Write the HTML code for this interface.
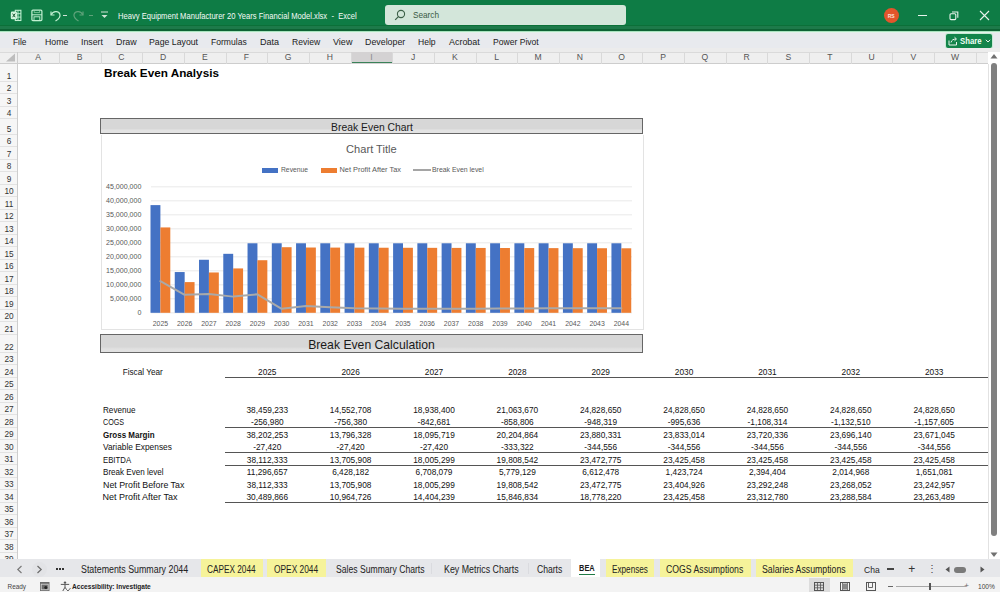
<!DOCTYPE html>
<html><head><meta charset="utf-8"><style>
html,body{margin:0;padding:0;width:1000px;height:592px;overflow:hidden;background:#fff;position:relative;font-family:"Liberation Sans", sans-serif;}
.t{position:absolute;white-space:nowrap;line-height:1;font-family:"Liberation Sans", sans-serif;}
</style></head><body>
<div style="position:absolute;left:0px;top:0px;width:1000px;height:25px;background:#0e7c45;"></div>
<div style="position:absolute;left:0px;top:25px;width:1000px;height:0.8px;background:#0b7038;"></div>
<div style="position:absolute;left:0px;top:25.8px;width:1000px;height:3.2px;background:#1d7a4a;"></div>
<div style="position:absolute;left:0px;top:29px;width:1000px;height:1.8px;background:#0d6334;"></div>
<div style="position:absolute;left:0px;top:30.8px;width:1000px;height:1px;background:#a9e3bf;"></div>
<svg style="position:absolute;left:10px;top:9px" width="12" height="13" viewBox="0 0 12 13">
<rect x="5.3" y="1.3" width="5.6" height="10.2" fill="none" stroke="#c2f0d2" stroke-width="1.1"/>
<path d="M8 1.3 V11.5 M5.3 4.7 H10.9 M5.3 8.1 H10.9" stroke="#c2f0d2" stroke-width="0.9"/>
<rect x="0.8" y="2.6" width="6.2" height="7.6" rx="1.3" fill="#d2f5dd"/>
<path d="M2.6 4.6 L5.2 8.2 M5.2 4.6 L2.6 8.2" stroke="#1d5c36" stroke-width="1"/>
</svg>
<svg style="position:absolute;left:31px;top:9px" width="12" height="13" viewBox="0 0 12 13">
<rect x="0.9" y="1.2" width="10" height="10.4" rx="1" fill="none" stroke="#c2f0d2" stroke-width="1.2"/>
<path d="M0.9 5.8 H10.9" stroke="#c2f0d2" stroke-width="1"/>
<rect x="3" y="7.8" width="5.8" height="3.8" fill="none" stroke="#c2f0d2" stroke-width="0.9"/>
<path d="M3.2 1.2 V3.6 H8.6 V1.2" fill="none" stroke="#9fdcb5" stroke-width="0.7"/>
</svg>
<svg style="position:absolute;left:49px;top:8px" width="13" height="14" viewBox="0 0 13 14">
<path d="M2 3.5 L2 7 L5.5 7" fill="none" stroke="#c2f0d2" stroke-width="1.2"/>
<path d="M2.2 6.8 C4 3 9.5 2.5 10.8 6 C11.8 9 9 11.5 6.5 13" fill="none" stroke="#c2f0d2" stroke-width="1.2"/>
</svg>
<div style="position:absolute;left:63px;top:15px;width:4px;height:1px;background:#cfe3d6;"></div>
<svg style="position:absolute;left:73px;top:8px" width="12" height="14" viewBox="0 0 12 14">
<path d="M10 3.5 L10 7 L6.5 7" fill="none" stroke="#5fa27a" stroke-width="1.2"/>
<path d="M9.8 6.8 C8 3 2.5 2.5 1.2 6 C0.2 9 3 11.5 5.5 13" fill="none" stroke="#5fa27a" stroke-width="1.2"/>
</svg>
<div style="position:absolute;left:89px;top:15px;width:4px;height:1px;background:#5fa27a;"></div>
<svg style="position:absolute;left:99px;top:10px" width="11" height="10" viewBox="0 0 11 10">
<line x1="2" y1="2" x2="9" y2="2" stroke="#cfe3d6" stroke-width="1"/>
<path d="M2.5 5 L8.5 5 L5.5 8 Z" fill="#cfe3d6"/>
</svg>
<div class="t" style="left:117.5px;top:16.2px;font-size:9.4px;color:#f4faf6;font-weight:normal;transform:translateY(-50%) scaleX(0.8109);transform-origin:0 50%;">Heavy Equipment Manufacturer 20 Years Financial Model.xlsx&nbsp; -&nbsp; Excel</div>
<div style="position:absolute;left:385px;top:5px;width:240.5px;height:19.5px;background:#d3e6da;border-radius:3px;"></div>
<svg style="position:absolute;left:394px;top:9px" width="12" height="12" viewBox="0 0 12 12">
<circle cx="7" cy="5" r="3.6" fill="none" stroke="#3b5f47" stroke-width="1.1"/>
<line x1="4.4" y1="7.6" x2="1.2" y2="10.8" stroke="#3b5f47" stroke-width="1.2"/>
</svg>
<div class="t" style="left:413px;top:15.3px;font-size:9.8px;color:#3a5a45;font-weight:normal;transform:translateY(-50%) scaleX(0.8387);transform-origin:0 50%;">Search</div>
<div style="position:absolute;left:883.5px;top:8px;width:15px;height:15px;border-radius:50%;background:#e2552b;"></div>
<div class="t" style="left:891.2px;top:15.6px;font-size:5px;color:#fbe3da;font-weight:bold;transform:translate(-50%,-50%);transform-origin:50% 50%;">RS</div>
<div style="position:absolute;left:918px;top:15px;width:9px;height:1px;background:#e8f3ec;"></div>
<svg style="position:absolute;left:949px;top:11px" width="10" height="10" viewBox="0 0 10 10">
<rect x="1" y="2.8" width="5.8" height="5.8" fill="none" stroke="#e8f3ec" stroke-width="1.1" rx="1"/>
<path d="M3 1 L8.8 1 L8.8 6.8" fill="none" stroke="#e8f3ec" stroke-width="1.1"/>
</svg>
<svg style="position:absolute;left:979px;top:10px" width="11" height="11" viewBox="0 0 11 11">
<path d="M1 1 L10 10 M10 1 L1 10" stroke="#e8f3ec" stroke-width="1.1"/>
</svg>
<div style="position:absolute;left:0px;top:31.8px;width:1000px;height:16px;background:#e8eaee;"></div>
<div style="position:absolute;left:0px;top:31.8px;width:1000px;height:1.2px;background:#e3f1ea;"></div>
<div class="t" style="left:13.4px;top:42.1px;font-size:9.5px;color:#222222;font-weight:normal;transform:translateY(-50%) scaleX(0.8800);transform-origin:0 50%;">File</div>
<div class="t" style="left:44.8px;top:42.1px;font-size:9.5px;color:#222222;font-weight:normal;transform:translateY(-50%) scaleX(0.9200);transform-origin:0 50%;">Home</div>
<div class="t" style="left:80.6px;top:42.1px;font-size:9.5px;color:#222222;font-weight:normal;transform:translateY(-50%) scaleX(0.9250);transform-origin:0 50%;">Insert</div>
<div class="t" style="left:116.2px;top:42.1px;font-size:9.5px;color:#222222;font-weight:normal;transform:translateY(-50%) scaleX(0.9318);transform-origin:0 50%;">Draw</div>
<div class="t" style="left:149.3px;top:42.1px;font-size:9.5px;color:#222222;font-weight:normal;transform:translateY(-50%) scaleX(0.9189);transform-origin:0 50%;">Page Layout</div>
<div class="t" style="left:211.4px;top:42.1px;font-size:9.5px;color:#222222;font-weight:normal;transform:translateY(-50%) scaleX(0.9025);transform-origin:0 50%;">Formulas</div>
<div class="t" style="left:260px;top:42.1px;font-size:9.5px;color:#222222;font-weight:normal;transform:translateY(-50%) scaleX(0.9500);transform-origin:0 50%;">Data</div>
<div class="t" style="left:292px;top:42.1px;font-size:9.5px;color:#222222;font-weight:normal;transform:translateY(-50%) scaleX(0.9032);transform-origin:0 50%;">Review</div>
<div class="t" style="left:333px;top:42.1px;font-size:9.5px;color:#222222;font-weight:normal;transform:translateY(-50%) scaleX(0.9500);transform-origin:0 50%;">View</div>
<div class="t" style="left:365px;top:42.1px;font-size:9.5px;color:#222222;font-weight:normal;transform:translateY(-50%) scaleX(0.9302);transform-origin:0 50%;">Developer</div>
<div class="t" style="left:418px;top:42.1px;font-size:9.5px;color:#222222;font-weight:normal;transform:translateY(-50%) scaleX(0.9000);transform-origin:0 50%;">Help</div>
<div class="t" style="left:449px;top:42.1px;font-size:9.5px;color:#222222;font-weight:normal;transform:translateY(-50%) scaleX(0.9394);transform-origin:0 50%;">Acrobat</div>
<div class="t" style="left:493px;top:42.1px;font-size:9.5px;color:#222222;font-weight:normal;transform:translateY(-50%) scaleX(0.9020);transform-origin:0 50%;">Power Pivot</div>
<div style="position:absolute;left:946px;top:33.6px;width:46.2px;height:14.8px;background:#12844a;border-radius:2px;box-shadow:0 0 0 1px #c6ead4;"></div>
<svg style="position:absolute;left:948px;top:36px" width="10" height="10" viewBox="0 0 10 10">
<path d="M1 4.5 L1 9 L8.5 9 L8.5 6" fill="none" stroke="#e8f3ec" stroke-width="1"/>
<path d="M3 6.5 C3.5 4 5.5 3 8 3 M6.5 1.2 L8.5 3 L6.5 4.8" fill="none" stroke="#e8f3ec" stroke-width="1"/>
</svg>
<div class="t" style="left:959.8px;top:41.2px;font-size:9px;color:#f0fff5;font-weight:bold;transform:translateY(-50%) scaleX(0.8640);transform-origin:0 50%;">Share</div>
<svg style="position:absolute;left:985px;top:39px" width="6" height="4" viewBox="0 0 6 4">
<path d="M0.8 0.8 L3 3 L5.2 0.8" fill="none" stroke="#e8f3ec" stroke-width="1"/>
</svg>
<div style="position:absolute;left:0px;top:47.8px;width:1000px;height:3.8px;background:#ececec;"></div>
<div style="position:absolute;left:0px;top:51.6px;width:988px;height:1px;background:#dadada;"></div>
<div style="position:absolute;left:0px;top:52.6px;width:988px;height:10.8px;background:#efefef;"></div>
<div style="position:absolute;left:0px;top:63.2px;width:988px;height:0.9px;background:#cdcdcd;"></div>
<div style="position:absolute;left:17.2px;top:52.5px;width:0.9px;height:11px;background:#d9d9d9;"></div>
<div class="t" style="left:38.04px;top:57.2px;font-size:8.6px;color:#555555;font-weight:normal;transform:translate(-50%,-50%);transform-origin:50% 50%;">A</div>
<div style="position:absolute;left:58.879999999999995px;top:52.5px;width:0.9px;height:11px;background:#d9d9d9;"></div>
<div class="t" style="left:79.72px;top:57.2px;font-size:8.6px;color:#555555;font-weight:normal;transform:translate(-50%,-50%);transform-origin:50% 50%;">B</div>
<div style="position:absolute;left:100.56px;top:52.5px;width:0.9px;height:11px;background:#d9d9d9;"></div>
<div class="t" style="left:121.4px;top:57.2px;font-size:8.6px;color:#555555;font-weight:normal;transform:translate(-50%,-50%);transform-origin:50% 50%;">C</div>
<div style="position:absolute;left:142.23999999999998px;top:52.5px;width:0.9px;height:11px;background:#d9d9d9;"></div>
<div class="t" style="left:163.07999999999998px;top:57.2px;font-size:8.6px;color:#555555;font-weight:normal;transform:translate(-50%,-50%);transform-origin:50% 50%;">D</div>
<div style="position:absolute;left:183.92px;top:52.5px;width:0.9px;height:11px;background:#d9d9d9;"></div>
<div class="t" style="left:204.76px;top:57.2px;font-size:8.6px;color:#555555;font-weight:normal;transform:translate(-50%,-50%);transform-origin:50% 50%;">E</div>
<div style="position:absolute;left:225.6px;top:52.5px;width:0.9px;height:11px;background:#d9d9d9;"></div>
<div class="t" style="left:246.44px;top:57.2px;font-size:8.6px;color:#555555;font-weight:normal;transform:translate(-50%,-50%);transform-origin:50% 50%;">F</div>
<div style="position:absolute;left:267.28px;top:52.5px;width:0.9px;height:11px;background:#d9d9d9;"></div>
<div class="t" style="left:288.11999999999995px;top:57.2px;font-size:8.6px;color:#555555;font-weight:normal;transform:translate(-50%,-50%);transform-origin:50% 50%;">G</div>
<div style="position:absolute;left:308.96px;top:52.5px;width:0.9px;height:11px;background:#d9d9d9;"></div>
<div class="t" style="left:329.79999999999995px;top:57.2px;font-size:8.6px;color:#555555;font-weight:normal;transform:translate(-50%,-50%);transform-origin:50% 50%;">H</div>
<div style="position:absolute;left:350.64px;top:51.5px;width:41.68px;height:12px;background:#d4d2d3;"></div>
<div style="position:absolute;left:350.64px;top:61.8px;width:41.68px;height:1.7px;background:#3a8259;"></div>
<div style="position:absolute;left:350.64px;top:52.5px;width:0.9px;height:11px;background:#d9d9d9;"></div>
<div class="t" style="left:371.47999999999996px;top:57.2px;font-size:8.6px;color:#8a8a8a;font-weight:normal;transform:translate(-50%,-50%);transform-origin:50% 50%;">I</div>
<div style="position:absolute;left:392.32px;top:52.5px;width:0.9px;height:11px;background:#d9d9d9;"></div>
<div class="t" style="left:413.15999999999997px;top:57.2px;font-size:8.6px;color:#555555;font-weight:normal;transform:translate(-50%,-50%);transform-origin:50% 50%;">J</div>
<div style="position:absolute;left:434.0px;top:52.5px;width:0.9px;height:11px;background:#d9d9d9;"></div>
<div class="t" style="left:454.84px;top:57.2px;font-size:8.6px;color:#555555;font-weight:normal;transform:translate(-50%,-50%);transform-origin:50% 50%;">K</div>
<div style="position:absolute;left:475.68px;top:52.5px;width:0.9px;height:11px;background:#d9d9d9;"></div>
<div class="t" style="left:496.52px;top:57.2px;font-size:8.6px;color:#555555;font-weight:normal;transform:translate(-50%,-50%);transform-origin:50% 50%;">L</div>
<div style="position:absolute;left:517.36px;top:52.5px;width:0.9px;height:11px;background:#d9d9d9;"></div>
<div class="t" style="left:538.2px;top:57.2px;font-size:8.6px;color:#555555;font-weight:normal;transform:translate(-50%,-50%);transform-origin:50% 50%;">M</div>
<div style="position:absolute;left:559.0400000000001px;top:52.5px;width:0.9px;height:11px;background:#d9d9d9;"></div>
<div class="t" style="left:579.8800000000001px;top:57.2px;font-size:8.6px;color:#555555;font-weight:normal;transform:translate(-50%,-50%);transform-origin:50% 50%;">N</div>
<div style="position:absolute;left:600.72px;top:52.5px;width:0.9px;height:11px;background:#d9d9d9;"></div>
<div class="t" style="left:621.5600000000001px;top:57.2px;font-size:8.6px;color:#555555;font-weight:normal;transform:translate(-50%,-50%);transform-origin:50% 50%;">O</div>
<div style="position:absolute;left:642.4000000000001px;top:52.5px;width:0.9px;height:11px;background:#d9d9d9;"></div>
<div class="t" style="left:663.2400000000001px;top:57.2px;font-size:8.6px;color:#555555;font-weight:normal;transform:translate(-50%,-50%);transform-origin:50% 50%;">P</div>
<div style="position:absolute;left:684.08px;top:52.5px;width:0.9px;height:11px;background:#d9d9d9;"></div>
<div class="t" style="left:704.9200000000001px;top:57.2px;font-size:8.6px;color:#555555;font-weight:normal;transform:translate(-50%,-50%);transform-origin:50% 50%;">Q</div>
<div style="position:absolute;left:725.76px;top:52.5px;width:0.9px;height:11px;background:#d9d9d9;"></div>
<div class="t" style="left:746.6px;top:57.2px;font-size:8.6px;color:#555555;font-weight:normal;transform:translate(-50%,-50%);transform-origin:50% 50%;">R</div>
<div style="position:absolute;left:767.44px;top:52.5px;width:0.9px;height:11px;background:#d9d9d9;"></div>
<div class="t" style="left:788.2800000000001px;top:57.2px;font-size:8.6px;color:#555555;font-weight:normal;transform:translate(-50%,-50%);transform-origin:50% 50%;">S</div>
<div style="position:absolute;left:809.12px;top:52.5px;width:0.9px;height:11px;background:#d9d9d9;"></div>
<div class="t" style="left:829.96px;top:57.2px;font-size:8.6px;color:#555555;font-weight:normal;transform:translate(-50%,-50%);transform-origin:50% 50%;">T</div>
<div style="position:absolute;left:850.8000000000001px;top:52.5px;width:0.9px;height:11px;background:#d9d9d9;"></div>
<div class="t" style="left:871.6400000000001px;top:57.2px;font-size:8.6px;color:#555555;font-weight:normal;transform:translate(-50%,-50%);transform-origin:50% 50%;">U</div>
<div style="position:absolute;left:892.48px;top:52.5px;width:0.9px;height:11px;background:#d9d9d9;"></div>
<div class="t" style="left:913.32px;top:57.2px;font-size:8.6px;color:#555555;font-weight:normal;transform:translate(-50%,-50%);transform-origin:50% 50%;">V</div>
<div style="position:absolute;left:934.1600000000001px;top:52.5px;width:0.9px;height:11px;background:#d9d9d9;"></div>
<div class="t" style="left:955.0000000000001px;top:57.2px;font-size:8.6px;color:#555555;font-weight:normal;transform:translate(-50%,-50%);transform-origin:50% 50%;">W</div>
<div style="position:absolute;left:975.84px;top:52.5px;width:0.9px;height:11px;background:#d9d9d9;"></div>
<svg style="position:absolute;left:5px;top:53px" width="11" height="9" viewBox="0 0 11 9">
<path d="M10 0.5 L10 8.5 L1 8.5 Z" fill="#bdbdbd"/></svg>
<div style="position:absolute;left:0px;top:63.5px;width:17.2px;height:495px;background:#f6f6f6;"></div>
<div style="position:absolute;left:17.2px;top:52px;width:1px;height:506.6px;background:#cdcdcd;"></div>
<div style="position:absolute;left:0px;top:80.5px;width:17.2px;height:0.8px;background:#e2e2e2;"></div>
<div class="t" style="left:9.3px;top:75.8px;font-size:9.6px;color:#333333;font-weight:normal;transform:translate(-50%,-50%) scaleX(0.86);transform-origin:50% 50%;">1</div>
<div style="position:absolute;left:0px;top:93.0px;width:17.2px;height:0.8px;background:#e2e2e2;"></div>
<div class="t" style="left:9.3px;top:88.3px;font-size:9.6px;color:#333333;font-weight:normal;transform:translate(-50%,-50%) scaleX(0.86);transform-origin:50% 50%;">2</div>
<div style="position:absolute;left:0px;top:105.5px;width:17.2px;height:0.8px;background:#e2e2e2;"></div>
<div class="t" style="left:9.3px;top:100.8px;font-size:9.6px;color:#333333;font-weight:normal;transform:translate(-50%,-50%) scaleX(0.86);transform-origin:50% 50%;">3</div>
<div style="position:absolute;left:0px;top:118.0px;width:17.2px;height:0.8px;background:#e2e2e2;"></div>
<div class="t" style="left:9.3px;top:113.3px;font-size:9.6px;color:#333333;font-weight:normal;transform:translate(-50%,-50%) scaleX(0.86);transform-origin:50% 50%;">4</div>
<div style="position:absolute;left:0px;top:133.5px;width:17.2px;height:0.8px;background:#e2e2e2;"></div>
<div class="t" style="left:9.3px;top:128.8px;font-size:9.6px;color:#333333;font-weight:normal;transform:translate(-50%,-50%) scaleX(0.86);transform-origin:50% 50%;">5</div>
<div style="position:absolute;left:0px;top:146.0px;width:17.2px;height:0.8px;background:#e2e2e2;"></div>
<div class="t" style="left:9.3px;top:141.3px;font-size:9.6px;color:#333333;font-weight:normal;transform:translate(-50%,-50%) scaleX(0.86);transform-origin:50% 50%;">6</div>
<div style="position:absolute;left:0px;top:158.5px;width:17.2px;height:0.8px;background:#e2e2e2;"></div>
<div class="t" style="left:9.3px;top:153.8px;font-size:9.6px;color:#333333;font-weight:normal;transform:translate(-50%,-50%) scaleX(0.86);transform-origin:50% 50%;">7</div>
<div style="position:absolute;left:0px;top:171.0px;width:17.2px;height:0.8px;background:#e2e2e2;"></div>
<div class="t" style="left:9.3px;top:166.3px;font-size:9.6px;color:#333333;font-weight:normal;transform:translate(-50%,-50%) scaleX(0.86);transform-origin:50% 50%;">8</div>
<div style="position:absolute;left:0px;top:183.5px;width:17.2px;height:0.8px;background:#e2e2e2;"></div>
<div class="t" style="left:9.3px;top:178.8px;font-size:9.6px;color:#333333;font-weight:normal;transform:translate(-50%,-50%) scaleX(0.86);transform-origin:50% 50%;">9</div>
<div style="position:absolute;left:0px;top:196.0px;width:17.2px;height:0.8px;background:#e2e2e2;"></div>
<div class="t" style="left:9.3px;top:191.3px;font-size:9.6px;color:#333333;font-weight:normal;transform:translate(-50%,-50%) scaleX(0.86);transform-origin:50% 50%;">10</div>
<div style="position:absolute;left:0px;top:208.5px;width:17.2px;height:0.8px;background:#e2e2e2;"></div>
<div class="t" style="left:9.3px;top:203.8px;font-size:9.6px;color:#333333;font-weight:normal;transform:translate(-50%,-50%) scaleX(0.86);transform-origin:50% 50%;">11</div>
<div style="position:absolute;left:0px;top:221.0px;width:17.2px;height:0.8px;background:#e2e2e2;"></div>
<div class="t" style="left:9.3px;top:216.3px;font-size:9.6px;color:#333333;font-weight:normal;transform:translate(-50%,-50%) scaleX(0.86);transform-origin:50% 50%;">12</div>
<div style="position:absolute;left:0px;top:233.5px;width:17.2px;height:0.8px;background:#e2e2e2;"></div>
<div class="t" style="left:9.3px;top:228.8px;font-size:9.6px;color:#333333;font-weight:normal;transform:translate(-50%,-50%) scaleX(0.86);transform-origin:50% 50%;">13</div>
<div style="position:absolute;left:0px;top:246.0px;width:17.2px;height:0.8px;background:#e2e2e2;"></div>
<div class="t" style="left:9.3px;top:241.3px;font-size:9.6px;color:#333333;font-weight:normal;transform:translate(-50%,-50%) scaleX(0.86);transform-origin:50% 50%;">14</div>
<div style="position:absolute;left:0px;top:258.5px;width:17.2px;height:0.8px;background:#e2e2e2;"></div>
<div class="t" style="left:9.3px;top:253.8px;font-size:9.6px;color:#333333;font-weight:normal;transform:translate(-50%,-50%) scaleX(0.86);transform-origin:50% 50%;">15</div>
<div style="position:absolute;left:0px;top:271.0px;width:17.2px;height:0.8px;background:#e2e2e2;"></div>
<div class="t" style="left:9.3px;top:266.3px;font-size:9.6px;color:#333333;font-weight:normal;transform:translate(-50%,-50%) scaleX(0.86);transform-origin:50% 50%;">16</div>
<div style="position:absolute;left:0px;top:283.5px;width:17.2px;height:0.8px;background:#e2e2e2;"></div>
<div class="t" style="left:9.3px;top:278.8px;font-size:9.6px;color:#333333;font-weight:normal;transform:translate(-50%,-50%) scaleX(0.86);transform-origin:50% 50%;">17</div>
<div style="position:absolute;left:0px;top:296.0px;width:17.2px;height:0.8px;background:#e2e2e2;"></div>
<div class="t" style="left:9.3px;top:291.3px;font-size:9.6px;color:#333333;font-weight:normal;transform:translate(-50%,-50%) scaleX(0.86);transform-origin:50% 50%;">18</div>
<div style="position:absolute;left:0px;top:308.5px;width:17.2px;height:0.8px;background:#e2e2e2;"></div>
<div class="t" style="left:9.3px;top:303.8px;font-size:9.6px;color:#333333;font-weight:normal;transform:translate(-50%,-50%) scaleX(0.86);transform-origin:50% 50%;">19</div>
<div style="position:absolute;left:0px;top:321.0px;width:17.2px;height:0.8px;background:#e2e2e2;"></div>
<div class="t" style="left:9.3px;top:316.3px;font-size:9.6px;color:#333333;font-weight:normal;transform:translate(-50%,-50%) scaleX(0.86);transform-origin:50% 50%;">20</div>
<div style="position:absolute;left:0px;top:333.5px;width:17.2px;height:0.8px;background:#e2e2e2;"></div>
<div class="t" style="left:9.3px;top:328.8px;font-size:9.6px;color:#333333;font-weight:normal;transform:translate(-50%,-50%) scaleX(0.86);transform-origin:50% 50%;">21</div>
<div style="position:absolute;left:0px;top:351.5px;width:17.2px;height:0.8px;background:#e2e2e2;"></div>
<div class="t" style="left:9.3px;top:346.8px;font-size:9.6px;color:#333333;font-weight:normal;transform:translate(-50%,-50%) scaleX(0.86);transform-origin:50% 50%;">22</div>
<div style="position:absolute;left:0px;top:364.0px;width:17.2px;height:0.8px;background:#e2e2e2;"></div>
<div class="t" style="left:9.3px;top:359.3px;font-size:9.6px;color:#333333;font-weight:normal;transform:translate(-50%,-50%) scaleX(0.86);transform-origin:50% 50%;">23</div>
<div style="position:absolute;left:0px;top:376.5px;width:17.2px;height:0.8px;background:#e2e2e2;"></div>
<div class="t" style="left:9.3px;top:371.8px;font-size:9.6px;color:#333333;font-weight:normal;transform:translate(-50%,-50%) scaleX(0.86);transform-origin:50% 50%;">24</div>
<div style="position:absolute;left:0px;top:389.0px;width:17.2px;height:0.8px;background:#e2e2e2;"></div>
<div class="t" style="left:9.3px;top:384.3px;font-size:9.6px;color:#333333;font-weight:normal;transform:translate(-50%,-50%) scaleX(0.86);transform-origin:50% 50%;">25</div>
<div style="position:absolute;left:0px;top:401.5px;width:17.2px;height:0.8px;background:#e2e2e2;"></div>
<div class="t" style="left:9.3px;top:396.8px;font-size:9.6px;color:#333333;font-weight:normal;transform:translate(-50%,-50%) scaleX(0.86);transform-origin:50% 50%;">26</div>
<div style="position:absolute;left:0px;top:414.0px;width:17.2px;height:0.8px;background:#e2e2e2;"></div>
<div class="t" style="left:9.3px;top:409.3px;font-size:9.6px;color:#333333;font-weight:normal;transform:translate(-50%,-50%) scaleX(0.86);transform-origin:50% 50%;">27</div>
<div style="position:absolute;left:0px;top:426.5px;width:17.2px;height:0.8px;background:#e2e2e2;"></div>
<div class="t" style="left:9.3px;top:421.8px;font-size:9.6px;color:#333333;font-weight:normal;transform:translate(-50%,-50%) scaleX(0.86);transform-origin:50% 50%;">28</div>
<div style="position:absolute;left:0px;top:439.0px;width:17.2px;height:0.8px;background:#e2e2e2;"></div>
<div class="t" style="left:9.3px;top:434.3px;font-size:9.6px;color:#333333;font-weight:normal;transform:translate(-50%,-50%) scaleX(0.86);transform-origin:50% 50%;">29</div>
<div style="position:absolute;left:0px;top:451.5px;width:17.2px;height:0.8px;background:#e2e2e2;"></div>
<div class="t" style="left:9.3px;top:446.8px;font-size:9.6px;color:#333333;font-weight:normal;transform:translate(-50%,-50%) scaleX(0.86);transform-origin:50% 50%;">30</div>
<div style="position:absolute;left:0px;top:464.0px;width:17.2px;height:0.8px;background:#e2e2e2;"></div>
<div class="t" style="left:9.3px;top:459.3px;font-size:9.6px;color:#333333;font-weight:normal;transform:translate(-50%,-50%) scaleX(0.86);transform-origin:50% 50%;">31</div>
<div style="position:absolute;left:0px;top:476.5px;width:17.2px;height:0.8px;background:#e2e2e2;"></div>
<div class="t" style="left:9.3px;top:471.8px;font-size:9.6px;color:#333333;font-weight:normal;transform:translate(-50%,-50%) scaleX(0.86);transform-origin:50% 50%;">32</div>
<div style="position:absolute;left:0px;top:489.0px;width:17.2px;height:0.8px;background:#e2e2e2;"></div>
<div class="t" style="left:9.3px;top:484.3px;font-size:9.6px;color:#333333;font-weight:normal;transform:translate(-50%,-50%) scaleX(0.86);transform-origin:50% 50%;">33</div>
<div style="position:absolute;left:0px;top:501.5px;width:17.2px;height:0.8px;background:#e2e2e2;"></div>
<div class="t" style="left:9.3px;top:496.8px;font-size:9.6px;color:#333333;font-weight:normal;transform:translate(-50%,-50%) scaleX(0.86);transform-origin:50% 50%;">34</div>
<div style="position:absolute;left:0px;top:514.0px;width:17.2px;height:0.8px;background:#e2e2e2;"></div>
<div class="t" style="left:9.3px;top:509.3px;font-size:9.6px;color:#333333;font-weight:normal;transform:translate(-50%,-50%) scaleX(0.86);transform-origin:50% 50%;">35</div>
<div style="position:absolute;left:0px;top:526.5px;width:17.2px;height:0.8px;background:#e2e2e2;"></div>
<div class="t" style="left:9.3px;top:521.8px;font-size:9.6px;color:#333333;font-weight:normal;transform:translate(-50%,-50%) scaleX(0.86);transform-origin:50% 50%;">36</div>
<div style="position:absolute;left:0px;top:539.0px;width:17.2px;height:0.8px;background:#e2e2e2;"></div>
<div class="t" style="left:9.3px;top:534.3px;font-size:9.6px;color:#333333;font-weight:normal;transform:translate(-50%,-50%) scaleX(0.86);transform-origin:50% 50%;">37</div>
<div style="position:absolute;left:0px;top:551.5px;width:17.2px;height:0.8px;background:#e2e2e2;"></div>
<div class="t" style="left:9.3px;top:546.8px;font-size:9.6px;color:#333333;font-weight:normal;transform:translate(-50%,-50%) scaleX(0.86);transform-origin:50% 50%;">38</div>
<div style="position:absolute;left:0px;top:564.0px;width:17.2px;height:0.8px;background:#e2e2e2;"></div>
<div class="t" style="left:9.3px;top:559.3px;font-size:9.6px;color:#333333;font-weight:normal;transform:translate(-50%,-50%) scaleX(0.86);transform-origin:50% 50%;">39</div>
<div style="position:absolute;left:987.5px;top:52px;width:12.5px;height:507px;background:#ffffff;"></div>
<div style="position:absolute;left:987.5px;top:63.5px;width:0.8px;height:495px;background:#e2e2e2;"></div>
<svg style="position:absolute;left:990px;top:53px" width="8" height="6" viewBox="0 0 8 6"><path d="M0.5 5.5 L4 1 L7.5 5.5 Z" fill="#707070"/></svg>
<div style="position:absolute;left:991.4px;top:63px;width:5.4px;height:473px;background:#808080;border-radius:3px;"></div>
<svg style="position:absolute;left:990px;top:552px" width="8" height="6" viewBox="0 0 8 6"><path d="M0.5 0.5 L4 5 L7.5 0.5 Z" fill="#707070"/></svg>
<div class="t" style="left:104px;top:73.5px;font-size:11.8px;color:#000;font-weight:bold;transform:translateY(-50%) scaleX(0.9940);transform-origin:0 50%;">Break Even Analysis</div>
<div style="position:absolute;left:100.3px;top:118.3px;width:542.3px;height:16.2px;background:linear-gradient(#d7d7d7 0%,#d7d7d7 68%,#e3e3e3 80%,#e3e3e3 100%);border:1px solid #666;box-sizing:border-box;"></div>
<div class="t" style="left:371.5px;top:126.9px;font-size:10.8px;color:#1a1a1a;font-weight:normal;transform:translate(-50%,-50%) scaleX(0.9600);transform-origin:50% 50%;">Break Even Chart</div>
<div style="position:absolute;left:100.5px;top:134.5px;width:543.5px;height:195.3px;border:1px solid #e3e3e3;border-top:none;box-sizing:border-box;background:#fff;"></div>
<div class="t" style="left:371.4px;top:150.2px;font-size:11.1px;color:#595959;font-weight:normal;transform:translate(-50%,-50%);transform-origin:50% 50%;">Chart Title</div>
<div style="position:absolute;left:262px;top:168px;width:16px;height:4.6px;background:#4472c4;"></div>
<div class="t" style="left:281px;top:170.3px;font-size:6.75px;color:#595959;font-weight:normal;transform:translateY(-50%);transform-origin:0 50%;">Revenue</div>
<div style="position:absolute;left:320.8px;top:168px;width:16.7px;height:4.6px;background:#ed7d31;"></div>
<div class="t" style="left:339.5px;top:170.3px;font-size:7.4px;color:#595959;font-weight:normal;transform:translateY(-50%);transform-origin:0 50%;">Net Profit After Tax</div>
<div style="position:absolute;left:413px;top:169.3px;width:17.5px;height:2.2px;background:#a5a5a5;"></div>
<div class="t" style="left:432px;top:170.3px;font-size:6.9px;color:#595959;font-weight:normal;transform:translateY(-50%);transform-origin:0 50%;">Break Even level</div>
<svg style="position:absolute;left:0;top:0" width="1000" height="592" viewBox="0 0 1000 592"><line x1="151" y1="312.80" x2="632" y2="312.80" stroke="#e4e4e4" stroke-width="0.8"/><line x1="151" y1="298.80" x2="632" y2="298.80" stroke="#e4e4e4" stroke-width="0.8"/><line x1="151" y1="284.80" x2="632" y2="284.80" stroke="#e4e4e4" stroke-width="0.8"/><line x1="151" y1="270.80" x2="632" y2="270.80" stroke="#e4e4e4" stroke-width="0.8"/><line x1="151" y1="256.80" x2="632" y2="256.80" stroke="#e4e4e4" stroke-width="0.8"/><line x1="151" y1="242.80" x2="632" y2="242.80" stroke="#e4e4e4" stroke-width="0.8"/><line x1="151" y1="228.80" x2="632" y2="228.80" stroke="#e4e4e4" stroke-width="0.8"/><line x1="151" y1="214.80" x2="632" y2="214.80" stroke="#e4e4e4" stroke-width="0.8"/><line x1="151" y1="200.80" x2="632" y2="200.80" stroke="#e4e4e4" stroke-width="0.8"/><line x1="151" y1="186.80" x2="632" y2="186.80" stroke="#e4e4e4" stroke-width="0.8"/><rect x="150.50" y="205.11" width="9.9" height="107.69" fill="#4472c4"/><rect x="160.40" y="227.43" width="9.9" height="85.37" fill="#ed7d31"/><rect x="174.76" y="272.05" width="9.9" height="40.75" fill="#4472c4"/><rect x="184.66" y="282.10" width="9.9" height="30.70" fill="#ed7d31"/><rect x="199.02" y="259.77" width="9.9" height="53.03" fill="#4472c4"/><rect x="208.92" y="272.47" width="9.9" height="40.33" fill="#ed7d31"/><rect x="223.28" y="253.82" width="9.9" height="58.98" fill="#4472c4"/><rect x="233.18" y="268.43" width="9.9" height="44.37" fill="#ed7d31"/><rect x="247.54" y="243.28" width="9.9" height="69.52" fill="#4472c4"/><rect x="257.44" y="260.22" width="9.9" height="52.58" fill="#ed7d31"/><rect x="271.80" y="243.28" width="9.9" height="69.52" fill="#4472c4"/><rect x="281.70" y="247.21" width="9.9" height="65.59" fill="#ed7d31"/><rect x="296.06" y="243.28" width="9.9" height="69.52" fill="#4472c4"/><rect x="305.96" y="247.52" width="9.9" height="65.28" fill="#ed7d31"/><rect x="320.32" y="243.28" width="9.9" height="69.52" fill="#4472c4"/><rect x="330.22" y="247.59" width="9.9" height="65.21" fill="#ed7d31"/><rect x="344.58" y="243.28" width="9.9" height="69.52" fill="#4472c4"/><rect x="354.48" y="247.66" width="9.9" height="65.14" fill="#ed7d31"/><rect x="368.84" y="243.28" width="9.9" height="69.52" fill="#4472c4"/><rect x="378.74" y="247.73" width="9.9" height="65.07" fill="#ed7d31"/><rect x="393.10" y="243.28" width="9.9" height="69.52" fill="#4472c4"/><rect x="403.00" y="247.78" width="9.9" height="65.02" fill="#ed7d31"/><rect x="417.36" y="243.28" width="9.9" height="69.52" fill="#4472c4"/><rect x="427.26" y="247.84" width="9.9" height="64.96" fill="#ed7d31"/><rect x="441.62" y="243.28" width="9.9" height="69.52" fill="#4472c4"/><rect x="451.52" y="247.90" width="9.9" height="64.90" fill="#ed7d31"/><rect x="465.88" y="243.28" width="9.9" height="69.52" fill="#4472c4"/><rect x="475.78" y="247.95" width="9.9" height="64.85" fill="#ed7d31"/><rect x="490.14" y="243.28" width="9.9" height="69.52" fill="#4472c4"/><rect x="500.04" y="248.01" width="9.9" height="64.79" fill="#ed7d31"/><rect x="514.40" y="243.28" width="9.9" height="69.52" fill="#4472c4"/><rect x="524.30" y="248.06" width="9.9" height="64.74" fill="#ed7d31"/><rect x="538.66" y="243.28" width="9.9" height="69.52" fill="#4472c4"/><rect x="548.56" y="248.12" width="9.9" height="64.68" fill="#ed7d31"/><rect x="562.92" y="243.28" width="9.9" height="69.52" fill="#4472c4"/><rect x="572.82" y="248.18" width="9.9" height="64.62" fill="#ed7d31"/><rect x="587.18" y="243.28" width="9.9" height="69.52" fill="#4472c4"/><rect x="597.08" y="248.23" width="9.9" height="64.57" fill="#ed7d31"/><rect x="611.44" y="243.28" width="9.9" height="69.52" fill="#4472c4"/><rect x="621.34" y="248.29" width="9.9" height="64.51" fill="#ed7d31"/><polyline points="160.40,281.17 184.66,294.80 208.92,294.02 233.18,296.62 257.44,294.29 281.70,308.81 305.96,306.10 330.22,307.16 354.48,308.18 378.74,308.46 403.00,308.66 427.26,308.74 451.52,308.74 475.78,308.66 500.04,308.54 524.30,308.43 548.56,308.32 572.82,308.26 597.08,308.21 621.34,308.15" fill="none" stroke="#a9a9a9" stroke-width="2" stroke-linejoin="round" stroke-linecap="round"/></svg>
<div class="t" style="right:858.6px;top:312.8px;font-size:7.07px;color:#595959;font-weight:normal;transform:translateY(-50%);transform-origin:100% 50%;">0</div>
<div class="t" style="right:858.6px;top:298.8px;font-size:7.07px;color:#595959;font-weight:normal;transform:translateY(-50%);transform-origin:100% 50%;">5,000,000</div>
<div class="t" style="right:858.6px;top:284.8px;font-size:7.07px;color:#595959;font-weight:normal;transform:translateY(-50%);transform-origin:100% 50%;">10,000,000</div>
<div class="t" style="right:858.6px;top:270.8px;font-size:7.07px;color:#595959;font-weight:normal;transform:translateY(-50%);transform-origin:100% 50%;">15,000,000</div>
<div class="t" style="right:858.6px;top:256.8px;font-size:7.07px;color:#595959;font-weight:normal;transform:translateY(-50%);transform-origin:100% 50%;">20,000,000</div>
<div class="t" style="right:858.6px;top:242.8px;font-size:7.07px;color:#595959;font-weight:normal;transform:translateY(-50%);transform-origin:100% 50%;">25,000,000</div>
<div class="t" style="right:858.6px;top:228.8px;font-size:7.07px;color:#595959;font-weight:normal;transform:translateY(-50%);transform-origin:100% 50%;">30,000,000</div>
<div class="t" style="right:858.6px;top:214.8px;font-size:7.07px;color:#595959;font-weight:normal;transform:translateY(-50%);transform-origin:100% 50%;">35,000,000</div>
<div class="t" style="right:858.6px;top:200.8px;font-size:7.07px;color:#595959;font-weight:normal;transform:translateY(-50%);transform-origin:100% 50%;">40,000,000</div>
<div class="t" style="right:858.6px;top:186.8px;font-size:7.07px;color:#595959;font-weight:normal;transform:translateY(-50%);transform-origin:100% 50%;">45,000,000</div>
<div class="t" style="left:160.4px;top:323.5px;font-size:6.9px;color:#595959;font-weight:normal;transform:translate(-50%,-50%);transform-origin:50% 50%;">2025</div>
<div class="t" style="left:184.66px;top:323.5px;font-size:6.9px;color:#595959;font-weight:normal;transform:translate(-50%,-50%);transform-origin:50% 50%;">2026</div>
<div class="t" style="left:208.92000000000002px;top:323.5px;font-size:6.9px;color:#595959;font-weight:normal;transform:translate(-50%,-50%);transform-origin:50% 50%;">2027</div>
<div class="t" style="left:233.18px;top:323.5px;font-size:6.9px;color:#595959;font-weight:normal;transform:translate(-50%,-50%);transform-origin:50% 50%;">2028</div>
<div class="t" style="left:257.44px;top:323.5px;font-size:6.9px;color:#595959;font-weight:normal;transform:translate(-50%,-50%);transform-origin:50% 50%;">2029</div>
<div class="t" style="left:281.70000000000005px;top:323.5px;font-size:6.9px;color:#595959;font-weight:normal;transform:translate(-50%,-50%);transform-origin:50% 50%;">2030</div>
<div class="t" style="left:305.96000000000004px;top:323.5px;font-size:6.9px;color:#595959;font-weight:normal;transform:translate(-50%,-50%);transform-origin:50% 50%;">2031</div>
<div class="t" style="left:330.22px;top:323.5px;font-size:6.9px;color:#595959;font-weight:normal;transform:translate(-50%,-50%);transform-origin:50% 50%;">2032</div>
<div class="t" style="left:354.48px;top:323.5px;font-size:6.9px;color:#595959;font-weight:normal;transform:translate(-50%,-50%);transform-origin:50% 50%;">2033</div>
<div class="t" style="left:378.74px;top:323.5px;font-size:6.9px;color:#595959;font-weight:normal;transform:translate(-50%,-50%);transform-origin:50% 50%;">2034</div>
<div class="t" style="left:403.0px;top:323.5px;font-size:6.9px;color:#595959;font-weight:normal;transform:translate(-50%,-50%);transform-origin:50% 50%;">2035</div>
<div class="t" style="left:427.26px;top:323.5px;font-size:6.9px;color:#595959;font-weight:normal;transform:translate(-50%,-50%);transform-origin:50% 50%;">2036</div>
<div class="t" style="left:451.52px;top:323.5px;font-size:6.9px;color:#595959;font-weight:normal;transform:translate(-50%,-50%);transform-origin:50% 50%;">2037</div>
<div class="t" style="left:475.78px;top:323.5px;font-size:6.9px;color:#595959;font-weight:normal;transform:translate(-50%,-50%);transform-origin:50% 50%;">2038</div>
<div class="t" style="left:500.0400000000001px;top:323.5px;font-size:6.9px;color:#595959;font-weight:normal;transform:translate(-50%,-50%);transform-origin:50% 50%;">2039</div>
<div class="t" style="left:524.3000000000001px;top:323.5px;font-size:6.9px;color:#595959;font-weight:normal;transform:translate(-50%,-50%);transform-origin:50% 50%;">2040</div>
<div class="t" style="left:548.5600000000001px;top:323.5px;font-size:6.9px;color:#595959;font-weight:normal;transform:translate(-50%,-50%);transform-origin:50% 50%;">2041</div>
<div class="t" style="left:572.82px;top:323.5px;font-size:6.9px;color:#595959;font-weight:normal;transform:translate(-50%,-50%);transform-origin:50% 50%;">2042</div>
<div class="t" style="left:597.08px;top:323.5px;font-size:6.9px;color:#595959;font-weight:normal;transform:translate(-50%,-50%);transform-origin:50% 50%;">2043</div>
<div class="t" style="left:621.34px;top:323.5px;font-size:6.9px;color:#595959;font-weight:normal;transform:translate(-50%,-50%);transform-origin:50% 50%;">2044</div>
<div style="position:absolute;left:100.3px;top:334.2px;width:542.3px;height:18.4px;background:linear-gradient(#d7d7d7 0%,#d7d7d7 70%,#e1e1e1 82%,#e1e1e1 100%);border:1px solid #666;box-sizing:border-box;"></div>
<div class="t" style="left:371.5px;top:344.5px;font-size:12.2px;color:#1a1a1a;font-weight:normal;transform:translate(-50%,-50%);transform-origin:50% 50%;">Break Even Calculation</div>
<div class="t" style="left:122.7px;top:372.6px;font-size:8.2px;color:#111;font-weight:normal;transform:translateY(-50%) scaleX(1.0000);transform-origin:0 50%;">Fiscal Year</div>
<div class="t" style="left:267.28px;top:371.7px;font-size:8.3px;color:#111;font-weight:normal;transform:translate(-50%,-50%);transform-origin:50% 50%;">2025</div>
<div class="t" style="left:350.64px;top:371.7px;font-size:8.3px;color:#111;font-weight:normal;transform:translate(-50%,-50%);transform-origin:50% 50%;">2026</div>
<div class="t" style="left:434.0px;top:371.7px;font-size:8.3px;color:#111;font-weight:normal;transform:translate(-50%,-50%);transform-origin:50% 50%;">2027</div>
<div class="t" style="left:517.3599999999999px;top:371.7px;font-size:8.3px;color:#111;font-weight:normal;transform:translate(-50%,-50%);transform-origin:50% 50%;">2028</div>
<div class="t" style="left:600.72px;top:371.7px;font-size:8.3px;color:#111;font-weight:normal;transform:translate(-50%,-50%);transform-origin:50% 50%;">2029</div>
<div class="t" style="left:684.0799999999999px;top:371.7px;font-size:8.3px;color:#111;font-weight:normal;transform:translate(-50%,-50%);transform-origin:50% 50%;">2030</div>
<div class="t" style="left:767.4399999999999px;top:371.7px;font-size:8.3px;color:#111;font-weight:normal;transform:translate(-50%,-50%);transform-origin:50% 50%;">2031</div>
<div class="t" style="left:850.8px;top:371.7px;font-size:8.3px;color:#111;font-weight:normal;transform:translate(-50%,-50%);transform-origin:50% 50%;">2032</div>
<div class="t" style="left:934.16px;top:371.7px;font-size:8.3px;color:#111;font-weight:normal;transform:translate(-50%,-50%);transform-origin:50% 50%;">2033</div>
<div style="position:absolute;left:225px;top:376.59999999999997px;width:763px;height:1.2px;background:#555;"></div>
<div class="t" style="left:102.6px;top:409.7px;font-size:9px;color:#111;font-weight:normal;transform:translateY(-50%) scaleX(0.9028);transform-origin:0 50%;">Revenue</div>
<div class="t" style="left:267.28px;top:409.7px;font-size:8.3px;color:#111;font-weight:normal;transform:translate(-50%,-50%);transform-origin:50% 50%;">38,459,233</div>
<div class="t" style="left:350.64px;top:409.7px;font-size:8.3px;color:#111;font-weight:normal;transform:translate(-50%,-50%);transform-origin:50% 50%;">14,552,708</div>
<div class="t" style="left:434.0px;top:409.7px;font-size:8.3px;color:#111;font-weight:normal;transform:translate(-50%,-50%);transform-origin:50% 50%;">18,938,400</div>
<div class="t" style="left:517.3599999999999px;top:409.7px;font-size:8.3px;color:#111;font-weight:normal;transform:translate(-50%,-50%);transform-origin:50% 50%;">21,063,670</div>
<div class="t" style="left:600.72px;top:409.7px;font-size:8.3px;color:#111;font-weight:normal;transform:translate(-50%,-50%);transform-origin:50% 50%;">24,828,650</div>
<div class="t" style="left:684.0799999999999px;top:409.7px;font-size:8.3px;color:#111;font-weight:normal;transform:translate(-50%,-50%);transform-origin:50% 50%;">24,828,650</div>
<div class="t" style="left:767.4399999999999px;top:409.7px;font-size:8.3px;color:#111;font-weight:normal;transform:translate(-50%,-50%);transform-origin:50% 50%;">24,828,650</div>
<div class="t" style="left:850.8px;top:409.7px;font-size:8.3px;color:#111;font-weight:normal;transform:translate(-50%,-50%);transform-origin:50% 50%;">24,828,650</div>
<div class="t" style="left:934.16px;top:409.7px;font-size:8.3px;color:#111;font-weight:normal;transform:translate(-50%,-50%);transform-origin:50% 50%;">24,828,650</div>
<div class="t" style="left:102.6px;top:422.2px;font-size:9px;color:#111;font-weight:normal;transform:translateY(-50%) scaleX(0.7963);transform-origin:0 50%;">COGS</div>
<div class="t" style="left:267.28px;top:422.2px;font-size:8.3px;color:#111;font-weight:normal;transform:translate(-50%,-50%);transform-origin:50% 50%;">-256,980</div>
<div class="t" style="left:350.64px;top:422.2px;font-size:8.3px;color:#111;font-weight:normal;transform:translate(-50%,-50%);transform-origin:50% 50%;">-756,380</div>
<div class="t" style="left:434.0px;top:422.2px;font-size:8.3px;color:#111;font-weight:normal;transform:translate(-50%,-50%);transform-origin:50% 50%;">-842,681</div>
<div class="t" style="left:517.3599999999999px;top:422.2px;font-size:8.3px;color:#111;font-weight:normal;transform:translate(-50%,-50%);transform-origin:50% 50%;">-858,806</div>
<div class="t" style="left:600.72px;top:422.2px;font-size:8.3px;color:#111;font-weight:normal;transform:translate(-50%,-50%);transform-origin:50% 50%;">-948,319</div>
<div class="t" style="left:684.0799999999999px;top:422.2px;font-size:8.3px;color:#111;font-weight:normal;transform:translate(-50%,-50%);transform-origin:50% 50%;">-995,636</div>
<div class="t" style="left:767.4399999999999px;top:422.2px;font-size:8.3px;color:#111;font-weight:normal;transform:translate(-50%,-50%);transform-origin:50% 50%;">-1,108,314</div>
<div class="t" style="left:850.8px;top:422.2px;font-size:8.3px;color:#111;font-weight:normal;transform:translate(-50%,-50%);transform-origin:50% 50%;">-1,132,510</div>
<div class="t" style="left:934.16px;top:422.2px;font-size:8.3px;color:#111;font-weight:normal;transform:translate(-50%,-50%);transform-origin:50% 50%;">-1,157,605</div>
<div class="t" style="left:102.6px;top:434.7px;font-size:9px;color:#111;font-weight:bold;transform:translateY(-50%) scaleX(0.8879);transform-origin:0 50%;">Gross Margin</div>
<div class="t" style="left:267.28px;top:434.7px;font-size:8.3px;color:#111;font-weight:normal;transform:translate(-50%,-50%);transform-origin:50% 50%;">38,202,253</div>
<div class="t" style="left:350.64px;top:434.7px;font-size:8.3px;color:#111;font-weight:normal;transform:translate(-50%,-50%);transform-origin:50% 50%;">13,796,328</div>
<div class="t" style="left:434.0px;top:434.7px;font-size:8.3px;color:#111;font-weight:normal;transform:translate(-50%,-50%);transform-origin:50% 50%;">18,095,719</div>
<div class="t" style="left:517.3599999999999px;top:434.7px;font-size:8.3px;color:#111;font-weight:normal;transform:translate(-50%,-50%);transform-origin:50% 50%;">20,204,864</div>
<div class="t" style="left:600.72px;top:434.7px;font-size:8.3px;color:#111;font-weight:normal;transform:translate(-50%,-50%);transform-origin:50% 50%;">23,880,331</div>
<div class="t" style="left:684.0799999999999px;top:434.7px;font-size:8.3px;color:#111;font-weight:normal;transform:translate(-50%,-50%);transform-origin:50% 50%;">23,833,014</div>
<div class="t" style="left:767.4399999999999px;top:434.7px;font-size:8.3px;color:#111;font-weight:normal;transform:translate(-50%,-50%);transform-origin:50% 50%;">23,720,336</div>
<div class="t" style="left:850.8px;top:434.7px;font-size:8.3px;color:#111;font-weight:normal;transform:translate(-50%,-50%);transform-origin:50% 50%;">23,696,140</div>
<div class="t" style="left:934.16px;top:434.7px;font-size:8.3px;color:#111;font-weight:normal;transform:translate(-50%,-50%);transform-origin:50% 50%;">23,671,045</div>
<div class="t" style="left:102.6px;top:447.2px;font-size:9px;color:#111;font-weight:normal;transform:translateY(-50%) scaleX(0.9257);transform-origin:0 50%;">Variable Expenses</div>
<div class="t" style="left:267.28px;top:447.2px;font-size:8.3px;color:#111;font-weight:normal;transform:translate(-50%,-50%);transform-origin:50% 50%;">-27,420</div>
<div class="t" style="left:350.64px;top:447.2px;font-size:8.3px;color:#111;font-weight:normal;transform:translate(-50%,-50%);transform-origin:50% 50%;">-27,420</div>
<div class="t" style="left:434.0px;top:447.2px;font-size:8.3px;color:#111;font-weight:normal;transform:translate(-50%,-50%);transform-origin:50% 50%;">-27,420</div>
<div class="t" style="left:517.3599999999999px;top:447.2px;font-size:8.3px;color:#111;font-weight:normal;transform:translate(-50%,-50%);transform-origin:50% 50%;">-333,322</div>
<div class="t" style="left:600.72px;top:447.2px;font-size:8.3px;color:#111;font-weight:normal;transform:translate(-50%,-50%);transform-origin:50% 50%;">-344,556</div>
<div class="t" style="left:684.0799999999999px;top:447.2px;font-size:8.3px;color:#111;font-weight:normal;transform:translate(-50%,-50%);transform-origin:50% 50%;">-344,556</div>
<div class="t" style="left:767.4399999999999px;top:447.2px;font-size:8.3px;color:#111;font-weight:normal;transform:translate(-50%,-50%);transform-origin:50% 50%;">-344,556</div>
<div class="t" style="left:850.8px;top:447.2px;font-size:8.3px;color:#111;font-weight:normal;transform:translate(-50%,-50%);transform-origin:50% 50%;">-344,556</div>
<div class="t" style="left:934.16px;top:447.2px;font-size:8.3px;color:#111;font-weight:normal;transform:translate(-50%,-50%);transform-origin:50% 50%;">-344,556</div>
<div class="t" style="left:102.6px;top:459.7px;font-size:9px;color:#111;font-weight:normal;transform:translateY(-50%) scaleX(0.8636);transform-origin:0 50%;">EBITDA</div>
<div class="t" style="left:267.28px;top:459.7px;font-size:8.3px;color:#111;font-weight:normal;transform:translate(-50%,-50%);transform-origin:50% 50%;">38,112,333</div>
<div class="t" style="left:350.64px;top:459.7px;font-size:8.3px;color:#111;font-weight:normal;transform:translate(-50%,-50%);transform-origin:50% 50%;">13,705,908</div>
<div class="t" style="left:434.0px;top:459.7px;font-size:8.3px;color:#111;font-weight:normal;transform:translate(-50%,-50%);transform-origin:50% 50%;">18,005,299</div>
<div class="t" style="left:517.3599999999999px;top:459.7px;font-size:8.3px;color:#111;font-weight:normal;transform:translate(-50%,-50%);transform-origin:50% 50%;">19,808,542</div>
<div class="t" style="left:600.72px;top:459.7px;font-size:8.3px;color:#111;font-weight:normal;transform:translate(-50%,-50%);transform-origin:50% 50%;">23,472,775</div>
<div class="t" style="left:684.0799999999999px;top:459.7px;font-size:8.3px;color:#111;font-weight:normal;transform:translate(-50%,-50%);transform-origin:50% 50%;">23,425,458</div>
<div class="t" style="left:767.4399999999999px;top:459.7px;font-size:8.3px;color:#111;font-weight:normal;transform:translate(-50%,-50%);transform-origin:50% 50%;">23,425,458</div>
<div class="t" style="left:850.8px;top:459.7px;font-size:8.3px;color:#111;font-weight:normal;transform:translate(-50%,-50%);transform-origin:50% 50%;">23,425,458</div>
<div class="t" style="left:934.16px;top:459.7px;font-size:8.3px;color:#111;font-weight:normal;transform:translate(-50%,-50%);transform-origin:50% 50%;">23,425,458</div>
<div class="t" style="left:102.6px;top:472.2px;font-size:9px;color:#111;font-weight:normal;transform:translateY(-50%) scaleX(0.8971);transform-origin:0 50%;">Break Even level</div>
<div class="t" style="left:267.28px;top:472.2px;font-size:8.3px;color:#111;font-weight:normal;transform:translate(-50%,-50%);transform-origin:50% 50%;">11,296,657</div>
<div class="t" style="left:350.64px;top:472.2px;font-size:8.3px;color:#111;font-weight:normal;transform:translate(-50%,-50%);transform-origin:50% 50%;">6,428,182</div>
<div class="t" style="left:434.0px;top:472.2px;font-size:8.3px;color:#111;font-weight:normal;transform:translate(-50%,-50%);transform-origin:50% 50%;">6,708,079</div>
<div class="t" style="left:517.3599999999999px;top:472.2px;font-size:8.3px;color:#111;font-weight:normal;transform:translate(-50%,-50%);transform-origin:50% 50%;">5,779,129</div>
<div class="t" style="left:600.72px;top:472.2px;font-size:8.3px;color:#111;font-weight:normal;transform:translate(-50%,-50%);transform-origin:50% 50%;">6,612,478</div>
<div class="t" style="left:684.0799999999999px;top:472.2px;font-size:8.3px;color:#111;font-weight:normal;transform:translate(-50%,-50%);transform-origin:50% 50%;">1,423,724</div>
<div class="t" style="left:767.4399999999999px;top:472.2px;font-size:8.3px;color:#111;font-weight:normal;transform:translate(-50%,-50%);transform-origin:50% 50%;">2,394,404</div>
<div class="t" style="left:850.8px;top:472.2px;font-size:8.3px;color:#111;font-weight:normal;transform:translate(-50%,-50%);transform-origin:50% 50%;">2,014,968</div>
<div class="t" style="left:934.16px;top:472.2px;font-size:8.3px;color:#111;font-weight:normal;transform:translate(-50%,-50%);transform-origin:50% 50%;">1,651,081</div>
<div class="t" style="left:102.6px;top:484.7px;font-size:9px;color:#111;font-weight:normal;transform:translateY(-50%) scaleX(0.9819);transform-origin:0 50%;">Net Profit Before Tax</div>
<div class="t" style="left:267.28px;top:484.7px;font-size:8.3px;color:#111;font-weight:normal;transform:translate(-50%,-50%);transform-origin:50% 50%;">38,112,333</div>
<div class="t" style="left:350.64px;top:484.7px;font-size:8.3px;color:#111;font-weight:normal;transform:translate(-50%,-50%);transform-origin:50% 50%;">13,705,908</div>
<div class="t" style="left:434.0px;top:484.7px;font-size:8.3px;color:#111;font-weight:normal;transform:translate(-50%,-50%);transform-origin:50% 50%;">18,005,299</div>
<div class="t" style="left:517.3599999999999px;top:484.7px;font-size:8.3px;color:#111;font-weight:normal;transform:translate(-50%,-50%);transform-origin:50% 50%;">19,808,542</div>
<div class="t" style="left:600.72px;top:484.7px;font-size:8.3px;color:#111;font-weight:normal;transform:translate(-50%,-50%);transform-origin:50% 50%;">23,472,775</div>
<div class="t" style="left:684.0799999999999px;top:484.7px;font-size:8.3px;color:#111;font-weight:normal;transform:translate(-50%,-50%);transform-origin:50% 50%;">23,404,926</div>
<div class="t" style="left:767.4399999999999px;top:484.7px;font-size:8.3px;color:#111;font-weight:normal;transform:translate(-50%,-50%);transform-origin:50% 50%;">23,292,248</div>
<div class="t" style="left:850.8px;top:484.7px;font-size:8.3px;color:#111;font-weight:normal;transform:translate(-50%,-50%);transform-origin:50% 50%;">23,268,052</div>
<div class="t" style="left:934.16px;top:484.7px;font-size:8.3px;color:#111;font-weight:normal;transform:translate(-50%,-50%);transform-origin:50% 50%;">23,242,957</div>
<div class="t" style="left:102.6px;top:497.2px;font-size:9px;color:#111;font-weight:normal;transform:translateY(-50%) scaleX(1.0000);transform-origin:0 50%;">Net Profit After Tax</div>
<div class="t" style="left:267.28px;top:497.2px;font-size:8.3px;color:#111;font-weight:normal;transform:translate(-50%,-50%);transform-origin:50% 50%;">30,489,866</div>
<div class="t" style="left:350.64px;top:497.2px;font-size:8.3px;color:#111;font-weight:normal;transform:translate(-50%,-50%);transform-origin:50% 50%;">10,964,726</div>
<div class="t" style="left:434.0px;top:497.2px;font-size:8.3px;color:#111;font-weight:normal;transform:translate(-50%,-50%);transform-origin:50% 50%;">14,404,239</div>
<div class="t" style="left:517.3599999999999px;top:497.2px;font-size:8.3px;color:#111;font-weight:normal;transform:translate(-50%,-50%);transform-origin:50% 50%;">15,846,834</div>
<div class="t" style="left:600.72px;top:497.2px;font-size:8.3px;color:#111;font-weight:normal;transform:translate(-50%,-50%);transform-origin:50% 50%;">18,778,220</div>
<div class="t" style="left:684.0799999999999px;top:497.2px;font-size:8.3px;color:#111;font-weight:normal;transform:translate(-50%,-50%);transform-origin:50% 50%;">23,425,458</div>
<div class="t" style="left:767.4399999999999px;top:497.2px;font-size:8.3px;color:#111;font-weight:normal;transform:translate(-50%,-50%);transform-origin:50% 50%;">23,312,780</div>
<div class="t" style="left:850.8px;top:497.2px;font-size:8.3px;color:#111;font-weight:normal;transform:translate(-50%,-50%);transform-origin:50% 50%;">23,288,584</div>
<div class="t" style="left:934.16px;top:497.2px;font-size:8.3px;color:#111;font-weight:normal;transform:translate(-50%,-50%);transform-origin:50% 50%;">23,263,489</div>
<div style="position:absolute;left:225px;top:426.59999999999997px;width:763px;height:1.2px;background:#555;"></div>
<div style="position:absolute;left:225px;top:452.0px;width:763px;height:1.2px;background:#555;"></div>
<div style="position:absolute;left:225px;top:464.5px;width:763px;height:1.2px;background:#555;"></div>
<div style="position:absolute;left:225px;top:502.0px;width:763px;height:1.2px;background:#555;"></div>
<div style="position:absolute;left:0px;top:558.6px;width:1000px;height:18.6px;background:#e6e7ea;"></div>
<svg style="position:absolute;left:16px;top:565px" width="7" height="9" viewBox="0 0 7 9"><path d="M5.5 1 L1.8 4.5 L5.5 8" fill="none" stroke="#7a7a7a" stroke-width="1.2"/></svg>
<div style="position:absolute;left:32px;top:561.5px;width:15px;height:15px;border-radius:50%;background:#e2e3e6;"></div>
<svg style="position:absolute;left:36px;top:565px" width="7" height="9" viewBox="0 0 7 9"><path d="M1.5 1 L5.2 4.5 L1.5 8" fill="none" stroke="#6a6a6a" stroke-width="1.2"/></svg>
<div style="position:absolute;left:56px;top:568px;width:2px;height:2px;background:#333;"></div>
<div style="position:absolute;left:59px;top:568px;width:2px;height:2px;background:#333;"></div>
<div style="position:absolute;left:62px;top:568px;width:2px;height:2px;background:#333;"></div>
<div class="t" style="left:81px;top:570.3px;font-size:10px;color:#222222;font-weight:normal;transform:translateY(-50%) scaleX(0.8843);transform-origin:0 50%;">Statements Summary 2044</div>
<div style="position:absolute;left:201px;top:559px;width:61.60000000000002px;height:18px;background:#f6f39a;"></div>
<div class="t" style="left:207px;top:570.3px;font-size:10px;color:#222222;font-weight:normal;transform:translateY(-50%) scaleX(0.8254);transform-origin:0 50%;">CAPEX 2044</div>
<div style="position:absolute;left:267px;top:559px;width:58.60000000000002px;height:18px;background:#f6f39a;"></div>
<div class="t" style="left:273.7px;top:570.3px;font-size:10px;color:#222222;font-weight:normal;transform:translateY(-50%) scaleX(0.8358);transform-origin:0 50%;">OPEX 2044</div>
<div class="t" style="left:336px;top:570.3px;font-size:10px;color:#222222;font-weight:normal;transform:translateY(-50%) scaleX(0.8612);transform-origin:0 50%;">Sales Summary Charts</div>
<div class="t" style="left:444.4px;top:570.3px;font-size:10px;color:#222222;font-weight:normal;transform:translateY(-50%) scaleX(0.8833);transform-origin:0 50%;">Key Metrics Charts</div>
<div class="t" style="left:536.6px;top:570.3px;font-size:10px;color:#222222;font-weight:normal;transform:translateY(-50%) scaleX(0.8586);transform-origin:0 50%;">Charts</div>
<div style="position:absolute;left:605.7px;top:559px;width:48.0px;height:18px;background:#f6f39a;"></div>
<div class="t" style="left:611.7px;top:570.3px;font-size:10px;color:#222222;font-weight:normal;transform:translateY(-50%) scaleX(0.8182);transform-origin:0 50%;">Expenses</div>
<div style="position:absolute;left:659.7px;top:559px;width:91.29999999999995px;height:18px;background:#f6f39a;"></div>
<div class="t" style="left:665.7px;top:570.3px;font-size:10px;color:#222222;font-weight:normal;transform:translateY(-50%) scaleX(0.8685);transform-origin:0 50%;">COGS Assumptions</div>
<div style="position:absolute;left:755.5px;top:559px;width:97.5px;height:18px;background:#f6f39a;"></div>
<div class="t" style="left:761.6px;top:570.3px;font-size:10px;color:#222222;font-weight:normal;transform:translateY(-50%) scaleX(0.8750);transform-origin:0 50%;">Salaries Assumptions</div>
<div style="position:absolute;left:431px;top:563px;width:0.8px;height:11px;background:#dadbdf;"></div>
<div style="position:absolute;left:527.5px;top:563px;width:0.8px;height:11px;background:#dadbdf;"></div>
<div style="position:absolute;left:571px;top:558.6px;width:29px;height:18.6px;background:#ffffff;"></div>
<div class="t" style="left:579px;top:568.3px;font-size:8.6px;color:#1a1a1a;font-weight:bold;transform:translateY(-50%) scaleX(0.8667);transform-origin:0 50%;">BEA</div>
<div style="position:absolute;left:579px;top:574.2px;width:16px;height:1.2px;background:#1f7a45;"></div>
<div class="t" style="left:863.7px;top:570.3px;font-size:9.6px;color:#262626;font-weight:normal;transform:translateY(-50%) scaleX(0.8889);transform-origin:0 50%;">Cha</div>
<div style="position:absolute;left:886.5px;top:568.2px;width:7px;height:1.6px;background:#444;"></div>
<div class="t" style="left:911.7px;top:568.8px;font-size:12px;color:#333;font-weight:normal;transform:translate(-50%,-50%);transform-origin:50% 50%;">+</div>
<div class="t" style="left:931.8px;top:569px;font-size:10px;color:#444;font-weight:normal;transform:translate(-50%,-50%);transform-origin:50% 50%;">&#8942;</div>
<svg style="position:absolute;left:945px;top:566px" width="5" height="7" viewBox="0 0 5 7"><path d="M4.5 0.5 L0.5 3.5 L4.5 6.5 Z" fill="#555"/></svg>
<div style="position:absolute;left:953.5px;top:566.5px;width:12.5px;height:6px;background:#7a7a7a;border-radius:3px;"></div>
<svg style="position:absolute;left:980px;top:566px" width="5" height="7" viewBox="0 0 5 7"><path d="M0.5 0.5 L4.5 3.5 L0.5 6.5 Z" fill="#555"/></svg>
<div style="position:absolute;left:0px;top:577.2px;width:1000px;height:14.8px;background:#f3f3f3;"></div>
<div class="t" style="left:7.6px;top:587px;font-size:6.4px;color:#444;font-weight:normal;transform:translateY(-50%);transform-origin:0 50%;">Ready</div>
<svg style="position:absolute;left:40px;top:582px" width="10" height="9" viewBox="0 0 10 9">
<rect x="0" y="0" width="9.5" height="9" fill="#6b6b6b"/>
<rect x="1.2" y="2.2" width="7" height="5.6" fill="none" stroke="#d8d8d8" stroke-width="0.8"/><circle cx="5.8" cy="5.6" r="1.5" fill="#222"/>
</svg>
<svg style="position:absolute;left:60px;top:581px" width="11" height="11" viewBox="0 0 11 11">
<circle cx="5" cy="1.6" r="1.2" fill="#555"/><path d="M0.8 3.4 L9.2 3.4 M5 3.4 L5 6.2 L2.8 10 M5 6.2 L6.5 8.5" fill="none" stroke="#555" stroke-width="1"/>
<path d="M6.5 8.5 L8 10 L10.5 7" fill="none" stroke="#555" stroke-width="0.9"/>
</svg>
<div class="t" style="left:72px;top:587px;font-size:6.6px;color:#222;font-weight:bold;transform:translateY(-50%);transform-origin:0 50%;">Accessibility: Investigate</div>
<div style="position:absolute;left:809px;top:577.5px;width:21px;height:14.5px;background:#dcdcdc;"></div>
<svg style="position:absolute;left:814px;top:582px" width="10" height="9" viewBox="0 0 10 9">
<rect x="0.5" y="0.5" width="9" height="8" fill="none" stroke="#555"/><path d="M3.5 0.5 V8.5 M6.5 0.5 V8.5 M0.5 3.2 H9.5 M0.5 5.8 H9.5" stroke="#555" stroke-width="0.8"/>
</svg>
<svg style="position:absolute;left:840px;top:582px" width="10" height="9" viewBox="0 0 10 9">
<rect x="0.5" y="0.5" width="9" height="8" fill="none" stroke="#555"/><path d="M2.5 0.5 V8.5 M7.5 0.5 V8.5" stroke="#555" stroke-width="0.8"/><rect x="2.5" y="1.5" width="5" height="6" fill="#888"/>
</svg>
<svg style="position:absolute;left:866px;top:582px" width="10" height="9" viewBox="0 0 10 9">
<rect x="0.5" y="0.5" width="9" height="8" fill="none" stroke="#555"/><path d="M2.5 0.5 V5.5 H6.5 V0.5" fill="none" stroke="#555" stroke-width="0.9"/>
</svg>
<div style="position:absolute;left:888px;top:586px;width:5px;height:1px;background:#666;"></div>
<div style="position:absolute;left:896px;top:586px;width:70px;height:1px;background:#a8a8a8;"></div>
<div style="position:absolute;left:928.5px;top:582.5px;width:2.5px;height:7px;background:#555;"></div>
<div class="t" style="left:966.7px;top:586.3px;font-size:8px;color:#666;font-weight:normal;transform:translate(-50%,-50%);transform-origin:50% 50%;">+</div>
<div class="t" style="left:978px;top:587px;font-size:6.6px;color:#444;font-weight:normal;transform:translateY(-50%);transform-origin:0 50%;">100%</div>
</body></html>
